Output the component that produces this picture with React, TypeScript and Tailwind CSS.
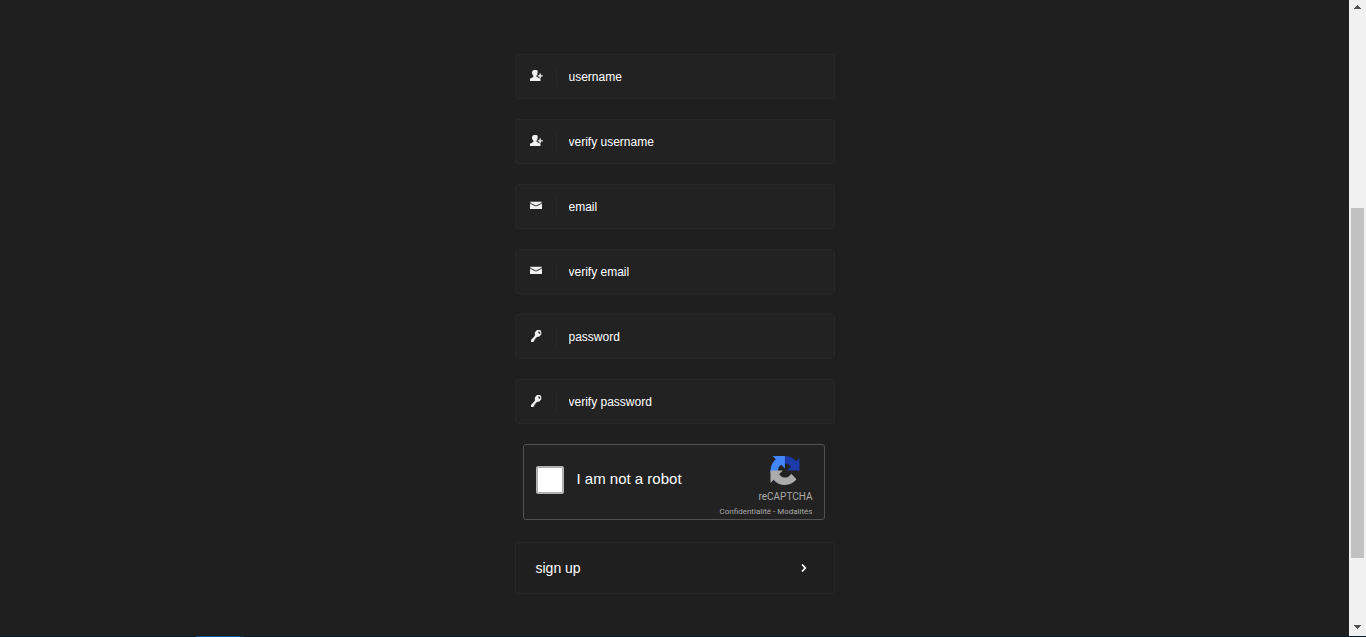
import React, { useState } from 'react'

interface IconProps {
  className?: string
}

const UserAddIcon: React.FC<IconProps> = ({ className = '' }) => (
  <svg viewBox="0 0 14 14" className={className} fill="currentColor" aria-hidden="true">
    <path d="M4 1h2.200C7.300 1 7.800 1.800 7.700 3L7.500 4.600c-.1.9-.5 1.500-1 2v1.200L10.500 9.800V12H0V9.800L3.300 8V6.600C2.700 6.100 2.200 5.400 2.100 4.500 1.900 2.500 2.400 1.400 4 1z" />
    <path d="M9.400 4.400h1.400v1.800h2v1.300h-2v1.800H9.400V7.500H7.600V6.200h1.800z" />
  </svg>
)

const MailIcon: React.FC<IconProps> = ({ className = '' }) => (
  <svg viewBox="0 0 14 14" className={className} fill="currentColor" aria-hidden="true">
    <path d="M.3 2.700h11.400v1L6.700 6.200a1.500 1.500 0 0 1-1.400 0L.3 3.700z" />
    <path d="M0 4.500l4.800 2.500a2.700 2.700 0 0 0 2.400 0L12 4.500v5a.6.600 0 0 1-.6.600H.6a.6.600 0 0 1-.6-.6z" />
  </svg>
)

const KeyIcon: React.FC<IconProps> = ({ className = '' }) => (
  <svg viewBox="0 0 14 14" className={className} fill="currentColor" aria-hidden="true">
    <path
      fillRule="evenodd"
      d="M7 1h2.300a2 2 0 0 1 2 2v2.200L9.400 7.600 7 8 5.300 9.500v1.100H4.300v1.200L3.200 13H1v-2l3.900-4.200-.1-3.200zM8.300 2.500v1.300l1.100 1h.8V3.400L9.300 2.500z"
    />
  </svg>
)

const RecaptchaLogo: React.FC<IconProps> = ({ className = '' }) => (
  <svg viewBox="0 0 64 64" className={className} aria-hidden="true">
    <path
      fill="#1c3aa9"
      d="M64 31.955l-.016-1.370V4.687l-7.160 7.160C50.965 4.674 42.033.093 32.050.093c-10.400 0-19.630 4.960-25.458 12.640l11.736 11.860a15.550 15.550 0 0 1 4.754-5.334c2.050-1.600 4.952-2.906 8.968-2.906.485 0 .860.057 1.135.163 4.976.393 9.288 3.140 11.828 7.124l-8.307 8.307z"
    />
    <path
      fill="#4285f4"
      d="M31.862.094l-1.370.016H4.594l7.160 7.160C4.580 13.147 0 22.080 0 32.046c0 10.400 4.960 19.630 12.640 25.458L24.500 45.768a15.550 15.550 0 0 1-5.334-4.754c-1.600-2.050-2.906-4.952-2.906-8.968 0-.485.057-.860.163-1.135.393-4.976 3.140-9.288 7.124-11.828l8.307 8.307z"
    />
    <path
      fill="#ababab"
      d="M0 32.045v27.280l7.160-7.160C13.037 59.341 21.969 63.920 31.953 63.920c10.400 0 19.630-4.960 25.458-12.640L45.675 39.420a15.550 15.550 0 0 1-4.754 5.334c-2.050 1.600-4.952 2.906-8.968 2.906-.485 0-.860-.057-1.135-.163-4.976-.393-9.288-3.140-11.828-7.124l8.307-8.307z"
    />
  </svg>
)

const fields = [
  { id: 'username', label: 'username', type: 'text', icon: UserAddIcon },
  { id: 'verify-username', label: 'verify username', type: 'text', icon: UserAddIcon },
  { id: 'email', label: 'email', type: 'email', icon: MailIcon },
  { id: 'verify-email', label: 'verify email', type: 'email', icon: MailIcon },
  { id: 'password', label: 'password', type: 'password', icon: KeyIcon },
  { id: 'verify-password', label: 'verify password', type: 'password', icon: KeyIcon },
]

interface FieldProps {
  id: string
  label: string
  type: string
  icon: React.FC<IconProps>
}

const Field: React.FC<FieldProps> = ({ id, label, type, icon: Icon }) => (
  <div className="flex h-[45px] items-center rounded-[3px] border border-[#282828] bg-[#222222]">
    <label htmlFor={id} className="flex h-5 w-[41px] items-center border-r border-[#282828] pb-0.5 pl-[14px]">
      <Icon className="h-[14px] w-[14px] text-[#f0f0f0]" />
    </label>
    <input
      id={id}
      type={type}
      aria-label={label}
      placeholder={label}
      className="h-full min-w-0 flex-1 bg-transparent px-3 text-xs text-white outline-none placeholder:text-white"
    />
  </div>
)

const Captcha: React.FC = () => {
  const [checked, setChecked] = useState(false)

  return (
    <div className="mx-2 flex h-[76px] w-[302px] justify-between rounded-[3px] border border-[#525252] bg-[#222222]">
      <div className="flex items-center gap-[13px] pb-1 pl-3">
        <input
          id="robot"
          type="checkbox"
          checked={checked}
          onChange={e => setChecked(e.target.checked)}
          className="h-7 w-7 appearance-none rounded-xs border-2 border-[#b2b2b2] bg-white checked:bg-[#4285f4]"
        />
        <label htmlFor="robot" className="pb-0.5 text-[15px] text-white">I am not a robot</label>
      </div>
      <div className="flex flex-col items-end pr-[11px] pt-[11px] font-[Roboto,sans-serif] text-[#aaaaaa]">
        <RecaptchaLogo className="mr-[13px] h-[30px] w-[30px]" />
        <span className="mt-1 text-[10px] leading-[15px]">reCAPTCHA</span>
        <div className="text-[8px] leading-[15px]">
          <a href="#privacy">Confidentialité</a> - <a href="#terms">Modalités</a>
        </div>
      </div>
    </div>
  )
}

const Scrollbar: React.FC = () => (
  <div className="flex w-[17px] flex-col items-center bg-[#f1f1f1] text-[#505050]" aria-hidden="true">
    <svg viewBox="0 0 17 17" className="h-[17px] w-[17px]" fill="currentColor">
      <path d="M8 5h1v1h1v1h1v1h1v1H5V8h1V7h1V6h1z" />
    </svg>
    <div className="flex w-full flex-1 flex-col px-0.5">
      <div className="flex-[191]" />
      <div className="flex-[350] bg-[#c1c1c1]" />
      <div className="flex-[61]" />
    </div>
    <svg viewBox="0 0 17 17" className="h-[17px] w-[17px]" fill="currentColor">
      <path d="M5 6h7v1h-1v1h-1v1H9v1H8V9H7V8H6V7H5z" />
    </svg>
  </div>
)

export default function App() {
  return (
    <div className="flex min-h-screen flex-col bg-[#1f1f1f] font-['Liberation_Sans',Arial,sans-serif]">
      <div className="flex flex-1">
        <main className="flex flex-1 justify-center pt-[54px]">
          <form className="w-80" onSubmit={e => e.preventDefault()}>
            <div className="mb-5 flex flex-col gap-5">
              {fields.map(field => (
                <Field key={field.id} {...field} />
              ))}
            </div>
            <Captcha />
            <button
              type="submit"
              className="mt-[22px] flex h-[52px] w-full items-center justify-between rounded-[3px] border border-[#272727] pl-5 pr-[27px] text-sm text-white"
            >
              sign up
              <svg viewBox="0 0 6 8" className="h-2 w-[6px]" fill="none" stroke="currentColor" strokeWidth="1.700" aria-hidden="true">
                <path d="M1 .5L4.300 4 1 7.500" />
              </svg>
            </button>
          </form>
        </main>
        <Scrollbar />
      </div>

      {/* Edge of the taskbar */}
      <div className="flex h-px bg-[#031a30]">
        <div className="ml-[196px] w-11 bg-[#14508c]" />
        <div className="w-1 bg-[#0b3158]" />
      </div>
    </div>
  )
}
